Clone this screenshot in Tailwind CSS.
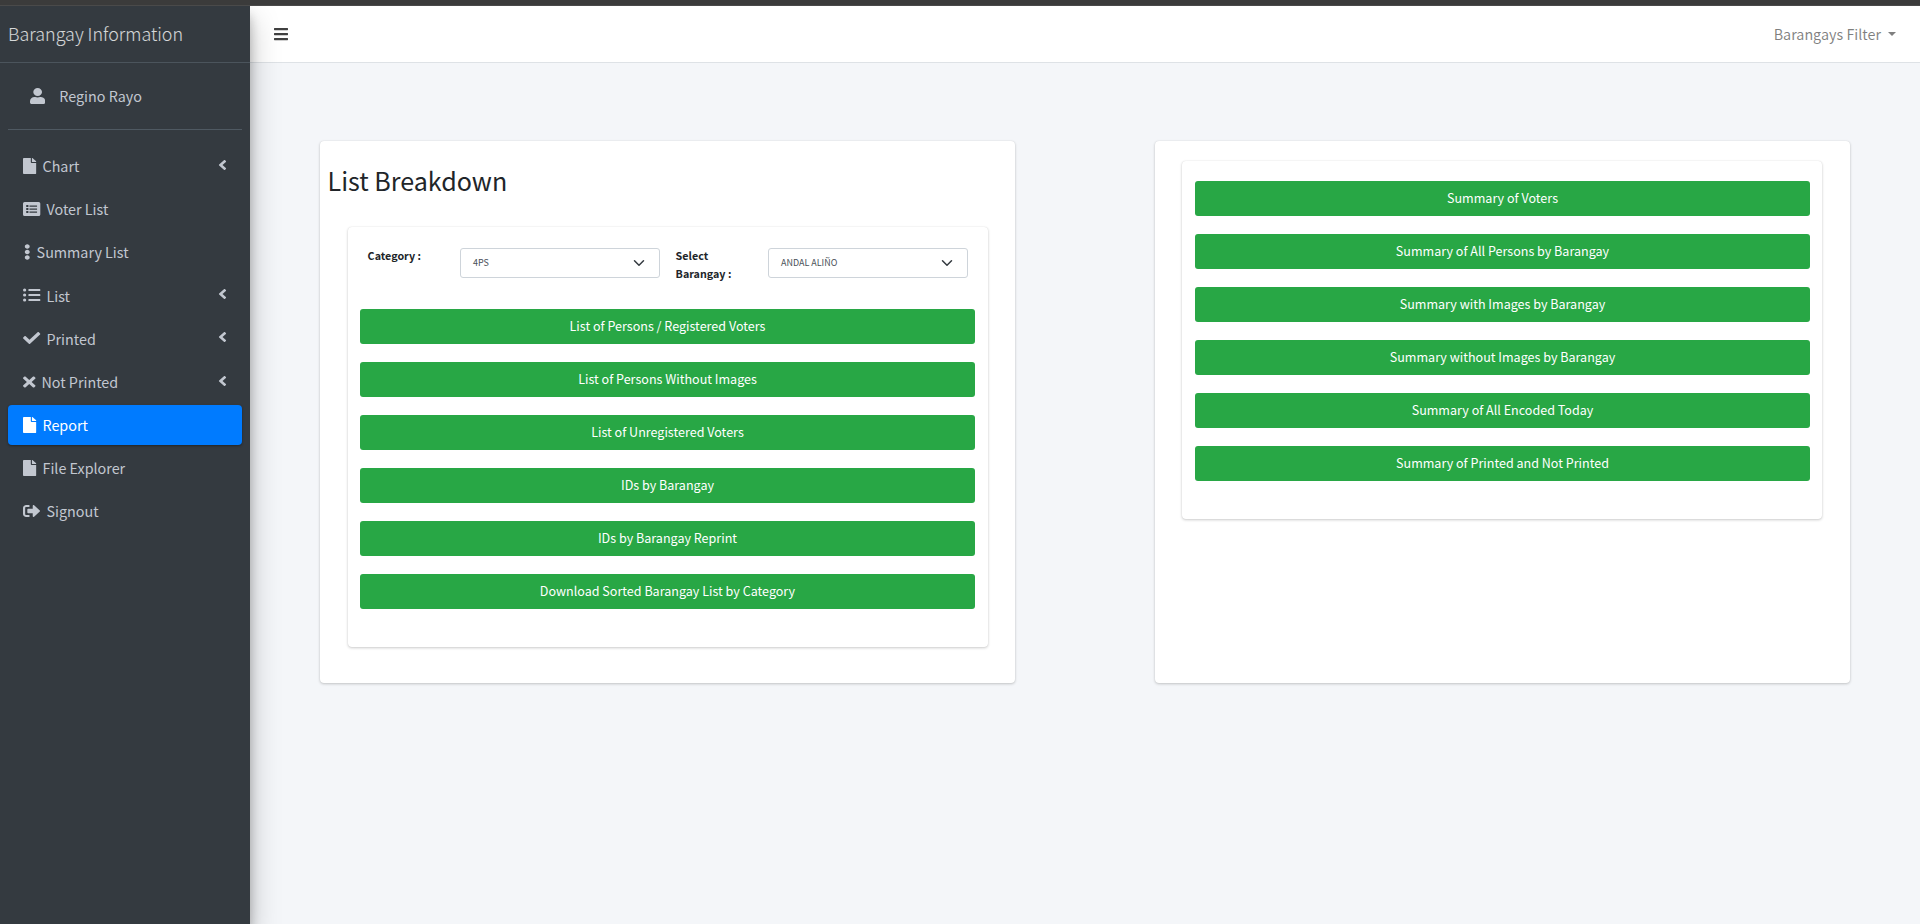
<!DOCTYPE html>
<html lang="en">
<head>
<meta charset="utf-8">
<title>Barangay Information</title>
<script src="https://cdn.jsdelivr.net/npm/@tailwindcss/browser@4"></script>
</head>
<body class="h-[924px] overflow-hidden bg-[#f4f6f9] font-['Noto_Sans_CJK_SC','Source_Sans_Pro',sans-serif] text-[14.33px] text-[#212529]">
<svg class="hidden">
  <symbol id="file" viewBox="0 0 384 512" preserveAspectRatio="none"><path d="M224 136V0H24C10.700 0 0 10.700 0 24v464c0 13.300 10.700 24 24 24h336c13.300 0 24-10.700 24-24V160H248c-13.200 0-24-10.800-24-24zm160-14.100v6.100H256V0h6.100c6.400 0 12.500 2.500 17 7l97.900 98c4.500 4.500 7 10.600 7 16.900z"/></symbol>
  <symbol id="angle" viewBox="0 0 256 512" preserveAspectRatio="none"><path d="M31.700 239l136-136c9.400-9.400 24.600-9.400 33.900 0l22.600 22.600c9.400 9.400 9.400 24.600 0 33.900L127.900 256l96.400 96.400c9.400 9.400 9.400 24.600 0 33.900L201.700 409c-9.400 9.400-24.600 9.400-33.900 0l-136-136c-9.500-9.400-9.500-24.600-.1-34z"/></symbol>
</svg>
<div class="flex h-full flex-col">
  <div class="h-1.5 shrink-0 border-b border-[#4a4a4a] bg-[#3b3b3b]"></div>
  <div class="flex min-h-0 flex-1 overflow-hidden">

    <aside class="z-10 flex w-[250px] shrink-0 flex-col bg-[#343a40] text-[#c2c7d0] shadow-[0_14px_28px_rgba(0,0,0,0.25),0_10px_10px_rgba(0,0,0,0.22)]">
      <div class="flex h-[57px] items-center border-b border-[#4b545c] pl-2 pb-0.5 text-[17.9px] font-light text-white/80">Barangay Information</div>
      <div class="mx-2 flex h-[67px] items-center border-b border-[#4f5962] pl-[22px]">
        <svg class="h-4 w-[15.300px]" viewBox="0 0 448 512" preserveAspectRatio="none" fill="currentColor"><path d="M224 256c70.700 0 128-57.300 128-128S294.700 0 224 0 96 57.300 96 128s57.300 128 128 128zm89.600 32h-16.700c-22.200 10.200-46.900 16-72.900 16s-50.600-5.800-72.900-16h-16.700C60.200 288 0 348.200 0 422.400V464c0 26.500 21.500 48 48 48h352c26.500 0 48-21.500 48-48v-41.600c0-74.200-60.200-134.400-134.400-134.400z"/></svg>
        <span class="pl-[14px]">Regino Rayo</span>
      </div>
      <nav class="mx-2 mt-[15.700px] flex flex-col gap-[3.200px]">
        <a class="flex h-10 items-center pl-[15.300px] pr-[15.500px]">
          <svg class="h-4 w-[13.400px]" fill="currentColor"><use href="#file"/></svg><span class="flex-1 pl-[5.800px]">Chart</span>
          <svg class="mb-[2px] h-4 w-[9px]" fill="currentColor"><use href="#angle"/></svg>
        </a>
        <a class="flex h-10 items-center pl-[15.300px] pr-[15.500px]">
          <svg class="h-4 w-[17.300px]" viewBox="0 0 512 512" preserveAspectRatio="none" fill="currentColor"><path fill-rule="evenodd" d="M48 32h416a48 48 0 0 1 48 48v352a48 48 0 0 1-48 48H48a48 48 0 0 1-48-48V80a48 48 0 0 1 48-48zM96 128v64h64v-64zM96 224v64h64v-64zM96 320v64h64v-64zM192 140v40h224v-40zM192 236v40h224v-40zM192 332v40h224v-40z"/></svg><span class="flex-1 pl-[5.900px]">Voter List</span>
        </a>
        <a class="flex h-10 items-center pl-4 pr-[15.500px]">
          <svg class="h-4 w-[6.500px]" viewBox="0 0 192 512" preserveAspectRatio="none" fill="currentColor"><path d="M96 184c39.800 0 72 32.200 72 72s-32.200 72-72 72-72-32.200-72-72 32.200-72 72-72zM24 80c0 39.800 32.200 72 72 72s72-32.200 72-72S135.800 8 96 8 24 40.200 24 80zm0 352c0 39.800 32.200 72 72 72s72-32.200 72-72-32.200-72-72-72-72 32.200-72 72z"/></svg><span class="flex-1 pl-[6.100px]">Summary List</span>
        </a>
        <a class="flex h-10 items-center pl-[15.300px] pr-[15.500px]">
          <svg class="h-4 w-[17.300px]" viewBox="0 0 512 512" preserveAspectRatio="none" fill="currentColor"><path d="M48 48a48 48 0 1 0 48 48 48 48 0 0 0-48-48zm0 160a48 48 0 1 0 48 48 48 48 0 0 0-48-48zm0 160a48 48 0 1 0 48 48 48 48 0 0 0-48-48zm448 16H176a16 16 0 0 0-16 16v32a16 16 0 0 0 16 16h320a16 16 0 0 0 16-16v-32a16 16 0 0 0-16-16zm0-320H176a16 16 0 0 0-16 16v32a16 16 0 0 0 16 16h320a16 16 0 0 0 16-16V80a16 16 0 0 0-16-16zm0 160H176a16 16 0 0 0-16 16v32a16 16 0 0 0 16 16h320a16 16 0 0 0 16-16v-32a16 16 0 0 0-16-16z"/></svg><span class="flex-1 pl-[5.900px]">List</span>
          <svg class="mb-[2px] h-4 w-[9px]" fill="currentColor"><use href="#angle"/></svg>
        </a>
        <a class="flex h-10 items-center pl-[15.300px] pr-[15.500px]">
          <svg class="h-4 w-[17.300px]" viewBox="0 0 512 512" preserveAspectRatio="none" fill="currentColor"><path d="M173.898 439.404l-166.400-166.400c-9.997-9.997-9.997-26.206 0-36.204l36.203-36.204c9.997-9.998 26.207-9.998 36.204 0L192 312.690 432.095 72.596c9.997-9.997 26.207-9.997 36.204 0l36.203 36.204c9.997 9.997 9.997 26.206 0 36.204l-294.400 294.401c-9.998 9.997-26.207 9.997-36.204-.001z"/></svg><span class="flex-1 pl-[5.900px]">Printed</span>
          <svg class="mb-[2px] h-4 w-[9px]" fill="currentColor"><use href="#angle"/></svg>
        </a>
        <a class="flex h-10 items-center pl-[15.300px] pr-[15.500px]">
          <svg class="h-4 w-[12.500px]" viewBox="0 0 352 512" preserveAspectRatio="none" fill="currentColor"><path d="M242.720 256l100.070-100.070c12.280-12.280 12.280-32.190 0-44.480l-22.240-22.240c-12.280-12.280-32.190-12.280-44.480 0L176 189.280 75.930 89.210c-12.280-12.280-32.190-12.280-44.480 0L9.210 111.450c-12.280 12.280-12.280 32.190 0 44.480L109.280 256 9.210 356.070c-12.280 12.280-12.280 32.190 0 44.480l22.240 22.240c12.280 12.280 32.200 12.280 44.480 0L176 322.720l100.070 100.070c12.280 12.280 32.200 12.280 44.480 0l22.240-22.240c12.280-12.280 12.280-32.190 0-44.480L242.720 256z"/></svg><span class="flex-1 pl-[5.700px]">Not Printed</span>
          <svg class="mb-[2px] h-4 w-[9px]" fill="currentColor"><use href="#angle"/></svg>
        </a>
        <a class="flex h-10 items-center rounded bg-[#007bff] pl-[15.300px] pr-[15.500px] text-white shadow-[0_1px_3px_rgba(0,0,0,0.12),0_1px_2px_rgba(0,0,0,0.24)]">
          <svg class="h-4 w-[13.400px]" fill="currentColor"><use href="#file"/></svg><span class="flex-1 pl-[5.800px]">Report</span>
        </a>
        <a class="flex h-10 items-center pl-[15.300px] pr-[15.500px]">
          <svg class="h-4 w-[13.400px]" fill="currentColor"><use href="#file"/></svg><span class="flex-1 pl-[5.800px]">File Explorer</span>
        </a>
        <a class="flex h-10 items-center pl-[15.300px] pr-[15.500px]">
          <svg class="h-4 w-[17.300px]" viewBox="0 0 512 512" preserveAspectRatio="none" fill="currentColor"><path d="M497 273L329 441c-15 15-41 4.500-41-17v-96H152c-13.300 0-24-10.700-24-24v-96c0-13.300 10.700-24 24-24h136V88c0-21.400 25.900-32 41-17l168 168c9.300 9.400 9.300 24.600 0 34zM192 436v-40c0-6.600-5.400-12-12-12H96c-17.700 0-32-14.300-32-32V160c0-17.700 14.300-32 32-32h84c6.600 0 12-5.400 12-12V76c0-6.600-5.400-12-12-12H96c-53 0-96 43-96 96v192c0 53 43 96 96 96h84c6.600 0 12-5.400 12-12z"/></svg><span class="flex-1 pl-[5.900px]">Signout</span>
        </a>
      </nav>
    </aside>

    <div class="flex min-w-0 flex-1 flex-col">
      <header class="flex h-[57px] shrink-0 items-center justify-between border-b border-[#dee2e6] bg-white pl-6 pr-6">
        <svg class="h-4 w-3.5 text-[#404040]" viewBox="0 0 448 512" fill="currentColor"><path d="M16 132h416c8.837 0 16-7.163 16-16V76c0-8.837-7.163-16-16-16H16C7.163 60 0 67.163 0 76v40c0 8.837 7.163 16 16 16zm0 160h416c8.837 0 16-7.163 16-16v-40c0-8.837-7.163-16-16-16H16c-8.837 0-16 7.163-16 16v40c0 8.837 7.163 16 16 16zm0 160h416c8.837 0 16-7.163 16-16v-40c0-8.837-7.163-16-16-16H16c-8.837 0-16 7.163-16 16v40c0 8.837 7.163 16 16 16z"/></svg>
        <div class="flex items-center gap-[7px] text-black/50">
          <span>Barangays Filter</span>
          <span class="border-x-[4.500px] border-t-[4.500px] border-x-transparent border-t-black/50"></span>
        </div>
      </header>

      <main class="grid grid-cols-2 gap-x-[139.200px] px-[69.600px] pt-[78px]">
        <section class="h-[542px] rounded bg-white pr-[27px] pl-[28px] shadow-[0_0_1px_rgba(0,0,0,0.125),0_1px_3px_rgba(0,0,0,0.2)]">
          <h3 class="-ml-5 pt-[22px] text-[25.070px] leading-[34px]">List Breakdown</h3>
          <div class="mt-[30px] h-[420px] rounded pr-[13.500px] pl-[12.500px] pt-[21px] shadow-[0_0_1px_rgba(0,0,0,0.125),0_1px_3px_rgba(0,0,0,0.2)]">
            <div class="flex h-[61px] items-start pl-[7.500px] text-[10.740px]">
              <div class="-mt-0.5 w-[92.500px] pt-px leading-[18px] font-bold">Category :</div>
              <div class="flex h-[30px] w-[200px] items-center justify-between rounded-[3px] border border-[#ced4da] pl-3 pr-3.5 text-[8.950px] text-[#495057]">
                <span>4PS</span>
                <svg class="h-3 w-3" viewBox="0 0 16 16" fill="none" stroke="#343a40" stroke-width="2" stroke-linecap="round" stroke-linejoin="round"><path d="m2 5 6 6 6-6"/></svg>
              </div>
              <div class="-mt-0.5 ml-[15.500px] w-[92.500px] pt-px leading-[18px] font-bold">Select<br>Barangay :</div>
              <div class="flex h-[30px] w-[200px] items-center justify-between rounded-[3px] border border-[#ced4da] pl-3 pr-3.5 text-[8.950px] text-[#495057]">
                <span>ANDAL ALIÑO</span>
                <svg class="h-3 w-3" viewBox="0 0 16 16" fill="none" stroke="#343a40" stroke-width="2" stroke-linecap="round" stroke-linejoin="round"><path d="m2 5 6 6 6-6"/></svg>
              </div>
            </div>
            <div class="flex flex-col gap-[18px] text-[12.560px] leading-[33px] text-white">
              <button class="h-[35px] rounded-[3px] bg-[#28a745] pb-0.5">List of Persons / Registered Voters</button>
              <button class="h-[35px] rounded-[3px] bg-[#28a745] pb-0.5">List of Persons Without Images</button>
              <button class="h-[35px] rounded-[3px] bg-[#28a745] pb-0.5">List of Unregistered Voters</button>
              <button class="h-[35px] rounded-[3px] bg-[#28a745] pb-0.5">IDs by Barangay</button>
              <button class="h-[35px] rounded-[3px] bg-[#28a745] pb-0.5">IDs by Barangay Reprint</button>
              <button class="h-[35px] rounded-[3px] bg-[#28a745] pb-0.5">Download Sorted Barangay List by Category</button>
            </div>
          </div>
        </section>

        <section class="h-[542px] rounded bg-white pr-[28px] pl-[27px] pt-5 shadow-[0_0_1px_rgba(0,0,0,0.125),0_1px_3px_rgba(0,0,0,0.2)]">
          <div class="flex h-[358px] flex-col gap-[18px] rounded pr-[12.400px] pl-[13.400px] pt-5 text-[12.560px] leading-[33px] text-white shadow-[0_0_1px_rgba(0,0,0,0.125),0_1px_3px_rgba(0,0,0,0.2)]">
            <button class="h-[35px] rounded-[3px] bg-[#28a745] pb-0.5">Summary of Voters</button>
            <button class="h-[35px] rounded-[3px] bg-[#28a745] pb-0.5">Summary of All Persons by Barangay</button>
            <button class="h-[35px] rounded-[3px] bg-[#28a745] pb-0.5">Summary with Images by Barangay</button>
            <button class="h-[35px] rounded-[3px] bg-[#28a745] pb-0.5">Summary without Images by Barangay</button>
            <button class="h-[35px] rounded-[3px] bg-[#28a745] pb-0.5">Summary of All Encoded Today</button>
            <button class="h-[35px] rounded-[3px] bg-[#28a745] pb-0.5">Summary of Printed and Not Printed</button>
          </div>
        </section>
      </main>
    </div>
  </div>
</div>
</body>
</html>
